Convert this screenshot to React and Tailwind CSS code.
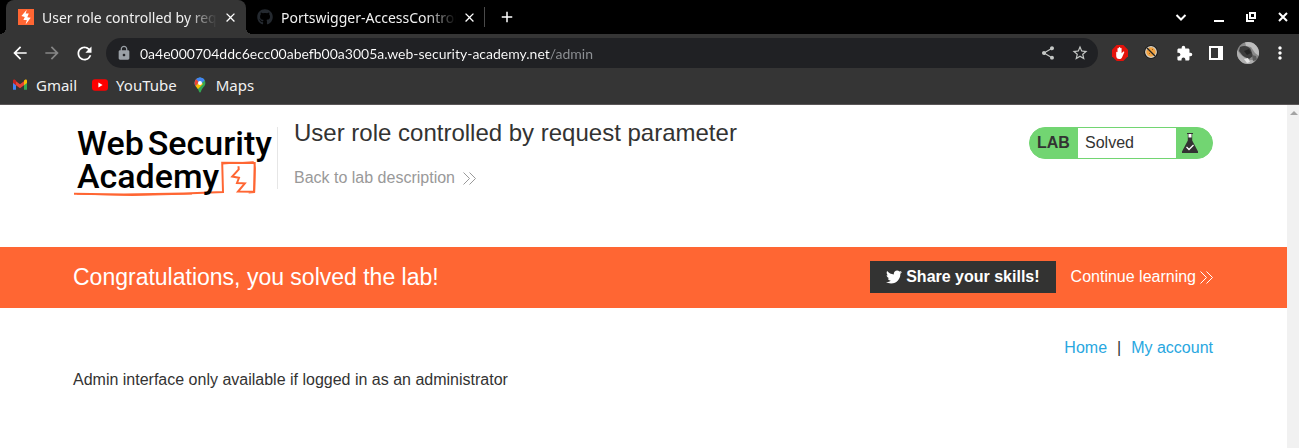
import React from "react";
import {
  MdArrowBack,
  MdArrowForward,
  MdRefresh,
  MdLock,
  MdShare,
  MdStarBorder,
  MdExtension,
  MdMoreVert,
  MdClose,
  MdAdd,
} from "react-icons/md";
import { FaGithub, FaTwitter } from "react-icons/fa";

function BurpIcon() {
  return (
    <svg viewBox="0 0 16 16" className="size-4 shrink-0" aria-hidden="true">
      <rect width="16" height="16" fill="#ff6633" />
      <path d="M8.800.8 7.600 4.600h3.200L9.300 8.200l3.400.6L7.600 15.400l1.200-4.300H5.400l1.400-3.200-3.400-.8z" fill="#fff" />
    </svg>
  );
}

function Tab({ title, icon, active }) {
  return (
    <div
      className={
        active
          ? "relative flex h-full w-60 items-center rounded-t-lg bg-[#353535] pl-3"
          : "relative flex h-full w-[238px] items-center pl-[11px]"
      }
    >
      {active && (
        <>
          <span className="absolute bottom-0 -left-1.5 size-1.5 bg-[radial-gradient(circle_at_0_0,transparent_6px,#353535_6px)]" />
          <span className="absolute bottom-0 -right-1.5 size-1.5 bg-[radial-gradient(circle_at_100%_0,transparent_6px,#353535_6px)]" />
        </>
      )}
      {icon}
      <span className="ml-2 w-[175px] overflow-hidden text-[14px] whitespace-nowrap text-[#f1f1f1] [mask-image:linear-gradient(to_right,#000_145px,transparent)]">
        {title}
      </span>
      <button aria-label={"Close " + title} className="ml-[5px] grid size-4 place-items-center text-white">
        <MdClose className="size-[15px]" />
      </button>
    </div>
  );
}

function IconButton({ label, children }) {
  return (
    <button aria-label={label} className="grid h-8 w-8 shrink-0 place-items-center text-white">
      {children}
    </button>
  );
}

function TabStrip() {
  return (
    <header className="flex h-[34px] items-center bg-black pl-1.5">
      <Tab active title="User role controlled by request parameter" icon={<BurpIcon />} />
      <Tab title="Portswigger-AccessControl" icon={<FaGithub className="size-4 shrink-0 text-[#24292f]" />} />
      <span className="mr-1.5 h-5 w-px bg-[#4a4a4a]" />
      <IconButton label="New tab">
        <MdAdd className="size-[18px]" />
      </IconButton>
      <div className="ml-auto flex">
        <IconButton label="Search tabs">
          <svg viewBox="0 0 12 12" className="size-3" fill="none" stroke="currentColor" strokeWidth="2">
            <path d="M1.500 4 6 8.500 10.500 4" />
          </svg>
        </IconButton>
        <span className="w-1.5" />
        <IconButton label="Minimize">
          <svg viewBox="0 0 12 12" className="size-3">
            <path d="M1 9h10v2H1z" fill="currentColor" />
          </svg>
        </IconButton>
        <IconButton label="Restore">
          <svg viewBox="0 0 12 12" className="size-3" fill="none" stroke="currentColor" strokeWidth="2">
            <path d="M5 2h5v5H5zM2 3v7h7" />
          </svg>
        </IconButton>
        <IconButton label="Close window">
          <svg viewBox="0 0 12 12" className="size-3" fill="none" stroke="currentColor" strokeWidth="2">
            <path d="m2 2 8 8M10 2l-8 8" />
          </svg>
        </IconButton>
      </div>
    </header>
  );
}

function Toolbar() {
  return (
    <div className="flex h-[38px] items-center bg-[#353535] pr-[3px] pl-1">
      <IconButton label="Back">
        <MdArrowBack className="size-5" />
      </IconButton>
      <IconButton label="Forward">
        <MdArrowForward className="size-5 text-[#868686]" />
      </IconButton>
      <IconButton label="Reload">
        <MdRefresh className="size-[21px]" />
      </IconButton>
      <div className="mx-1.5 flex h-[30px] flex-1 items-center rounded-full bg-[#202124] pr-0.5 pl-2.5">
        <MdLock className="size-4 text-[#9aa0a6]" />
        <input
          aria-label="Address"
          defaultValue="0a4e000704ddc6ecc00abefb00a3005a.web-security-academy.net/admin"
          className="ml-2 flex-1 bg-[linear-gradient(to_right,#fff_410px,#8f9296_410px)] bg-clip-text font-['Lato',sans-serif] text-[14px] text-transparent outline-none"
        />
        <IconButton label="Share">
          <MdShare className="size-4 text-[#c4c7c5]" />
        </IconButton>
        <IconButton label="Bookmark this page">
          <MdStarBorder className="size-[18px] text-[#c4c7c5]" />
        </IconButton>
      </div>
      <IconButton label="Ad blocker">
        <svg viewBox="0 0 16 16" className="size-4">
          <path d="M4.700 0h6.600L16 4.700v6.600L11.300 16H4.700L0 11.300V4.700z" fill="#e3120b" />
          <path
            d="M4.200 7.400c0-.9 1.200-.9 1.300 0V3.600c0-.9 1.300-.9 1.300 0V2.700c0-.9 1.400-.9 1.400 0v.7c0-.9 1.400-.9 1.400 0v4.900l1.500-1.500c.7-.5 1.500.1 1.100.8L10 12.500c-.6 1-1.500 1.500-2.700 1.500-2 0-3.100-1.300-3.100-3.300z"
            fill="#fff"
          />
        </svg>
      </IconButton>
      <IconButton label="Cookie extension">
        <svg viewBox="0 0 16 16" className="size-4">
          <circle cx="7" cy="7" r="6.800" fill="#171717" />
          <circle cx="7" cy="7" r="5.300" fill="#f2a341" stroke="#d6d0c4" strokeWidth="1.200" />
          <path d="m3 3 8 8" stroke="#222" strokeWidth="1.200" />
          <path d="M5 8h1v1H5zM8 4h1v1H8z" fill="#a65f16" />
        </svg>
      </IconButton>
      <IconButton label="Extensions">
        <MdExtension className="size-[17px]" />
      </IconButton>
      <IconButton label="Side panel">
        <svg viewBox="0 0 14 14" className="size-3.5">
          <path d="M0 0h14v14H0zM2 2v10h7V2z" fill="#fff" fillRule="evenodd" />
        </svg>
      </IconButton>
      <IconButton label="Profile">
        <svg viewBox="0 0 22 22" className="size-[22px]">
          <clipPath id="avatar">
            <circle cx="11" cy="11" r="11" />
          </clipPath>
          <g clipPath="url(#avatar)">
            <path d="M0 0h22v22H0z" fill="#8a8a8a" />
            <path d="M8 0h8l6 6v8l-4-3-4-6-5-1z" fill="#bdbdbd" />
            <path d="M3 5c4-2 9-1 11 3l2 6-4 3-6-3-4-5z" fill="#3c3c3c" />
            <path d="m7 9 5-2 2 4-4 2z" fill="#242424" />
            <path d="m0 8 3 4 5 4 5 2 5 0-3 4H6l-6-6z" fill="#b0b0b0" />
            <path d="m7 17 4-1 2 4-3 1z" fill="#e6e6e6" />
            <path d="m15 13 4 1 1 4-4 1z" fill="#5c5c5c" />
          </g>
        </svg>
      </IconButton>
      <IconButton label="Menu">
        <MdMoreVert className="size-5" />
      </IconButton>
    </div>
  );
}

function Bookmarks() {
  return (
    <nav className="flex h-[33px] items-center gap-[15px] border-b border-[#5a5657] bg-[#353535] pb-1.5 pl-3 text-[15px] text-[#f1f1f1]">
      <a href="#gmail" className="flex items-center gap-2">
        <svg viewBox="0 0 16 16" className="size-4">
          <path d="M1 3.500v9.300h3V7.500z" fill="#4285f4" />
          <path d="M15 3.500v9.300h-3V7.500z" fill="#34a853" />
          <path d="M4 4.300v4L8 11.300l4-3v-4L8 7.300z" fill="#ea4335" />
          <path d="M1 3.800C1 2.400 2.500 2.200 3.300 3L4 3.600v4.700L1 6z" fill="#c5221f" />
          <path d="M15 3.800c0-1.400-1.500-1.600-2.300-.8l-.7.6v4.700L15 6z" fill="#fbbc04" />
        </svg>
        Gmail
      </a>
      <a href="#youtube" className="flex items-center gap-2">
        <svg viewBox="0 0 16 16" className="size-4">
          <rect y="2.200" width="16" height="11.600" rx="3" fill="#f00" />
          <path d="M6.400 5.600v4.800L10.600 8z" fill="#fff" />
        </svg>
        YouTube
      </a>
      <a href="#maps" className="flex items-center gap-2">
        <svg viewBox="0 0 16 16" className="size-4">
          <clipPath id="pin">
            <path d="M8 .5a5.400 5.400 0 0 1 5.400 5.400c0 3.400-3.400 4.600-4.400 8.700-.3 1.200-1.700 1.200-2 0C6 10.500 2.600 9.300 2.600 5.900A5.400 5.400 0 0 1 8 .5z" />
          </clipPath>
          <g clipPath="url(#pin)">
            <path d="M0 0h16v16H0z" fill="#34a853" />
            <path d="M0 12 14 0v-2H0z" fill="#4285f4" />
            <path d="M0 0h3l4 5-5 6H0z" fill="#ea4335" />
            <path d="m2 11 6-7 3 3-6 6z" fill="#fbbc04" />
            <path d="m4 2 4-2 6 2-5 5z" fill="#4285f4" />
          </g>
          <circle cx="8" cy="5.900" r="2" fill="#fff" />
        </svg>
        Maps
      </a>
    </nav>
  );
}

function Chevrons() {
  return (
    <svg viewBox="0 0 13 13" className="size-[13px]" fill="none" stroke="currentColor" strokeWidth="1">
      <path d="M.5.5l6 6-6 6M6.500.5l6 6-6 6" />
    </svg>
  );
}

function Logo() {
  return (
    <a
      href="#academy"
      className="relative block w-[204px] shrink-0 pl-1 font-['Roboto',sans-serif] text-[34px] leading-[33px] font-medium text-black"
    >
      <svg viewBox="0 0 204 72" className="absolute top-0 left-0 h-[72px] w-[204px]" fill="none" stroke="#ff6633" aria-hidden="true">
        <path d="m1 66.800 50 .7 60-1 39-1.500-.8-29.300 32.500.3-.7 28.800-16-.3 6.800-8.200-7.800-.3 2-5.200-6.800-1.300 6.500-7.200-.2-3" strokeWidth="2" />
        <path d="m4 67 55 1.500 60-1.500" strokeWidth="1.200" />
        <path d="m149.500 37 31-2.300 1.800 6-.6 24.800-6 .5" strokeWidth="1" />
      </svg>
      <span className="relative flex gap-1">
        <span>Web</span>
        <span>Security</span>
      </span>
      <span className="relative block">Academy</span>
    </a>
  );
}

function LabStatus() {
  return (
    <div className="flex h-8 w-[184px] items-stretch overflow-hidden rounded-full border border-[#72d572] bg-[#72d572] text-[16px]">
      <span className="flex w-12 items-center pl-[7px] font-bold">LAB</span>
      <span className="flex flex-1 items-center bg-white pl-[7px]">Solved</span>
      <span className="flex w-9 items-center pl-1.5">
        <svg viewBox="0 0 16 20" className="h-5 w-4">
          <path d="M5 0h6v1h-.8v6.500L16 18.500V20H0v-1.500L5.800 7.500V1H5z" fill="#333332" />
          <path d="M6.500 1h3v3.500h-3z" fill="#fff" />
          <path d="m4.500 14 2.500 2.500 4.500-4.500" fill="none" stroke="#fff" strokeWidth="1.300" />
        </svg>
      </span>
    </div>
  );
}

export default function App() {
  return (
    <div className="flex min-h-screen flex-col bg-white font-['Noto_Sans',sans-serif]">
      <TabStrip />
      <Toolbar />
      <Bookmarks />
      <div className="flex flex-1 font-['Liberation_Sans',Arial,sans-serif] text-[16px] text-[#333332]">
        <main className="flex-1">
          <section className="mx-auto flex max-w-[1141px] items-start pt-[22px] pr-px pb-[50px]">
            <Logo />
            <div className="h-[62px] border-l border-[#e6e6e6] pl-4">
              <h1 className="-mt-2 text-[24px] leading-7">User role controlled by request parameter</h1>
              <a href="#lab" className="mt-[21px] flex items-center gap-2 leading-5 text-[#999]">
                Back to lab description
                <Chevrons />
              </a>
            </div>
            <div className="mb-[38px] ml-auto">
              <LabStatus />
            </div>
          </section>
          <section className="bg-[#ff6633] pt-3.5 pb-[15px] text-white">
            <div className="mx-auto flex max-w-[1141px] items-center pr-px">
              <h2 className="text-[23px] leading-8">Congratulations, you solved the lab!</h2>
              <button className="ml-auto flex h-8 items-center gap-1 bg-[#333332] px-4 font-bold">
                <FaTwitter className="size-4" />
                Share your skills!
              </button>
              <a href="#continue" className="ml-[15px] flex items-center gap-1">
                Continue learning
                <Chevrons />
              </a>
            </div>
          </section>
          <section className="mx-auto max-w-[1141px] pt-[30px] pr-px">
            <nav className="flex justify-end gap-2.5 leading-5">
              <a href="#home" className="text-[#29a7df]">Home</a>
              <span>|</span>
              <a href="#account" className="text-[#29a7df]">My account</a>
            </nav>
            <p className="mt-3 leading-5">Admin interface only available if logged in as an administrator</p>
          </section>
        </main>
        <div className="w-3 bg-[#f1f1f1] pt-1.5">
          <svg viewBox="0 0 8 4" className="ml-[3px] h-1 w-2">
            <path d="m0 4 4-4 4 4z" fill="#a3a3a3" />
          </svg>
        </div>
      </div>
    </div>
  );
}
